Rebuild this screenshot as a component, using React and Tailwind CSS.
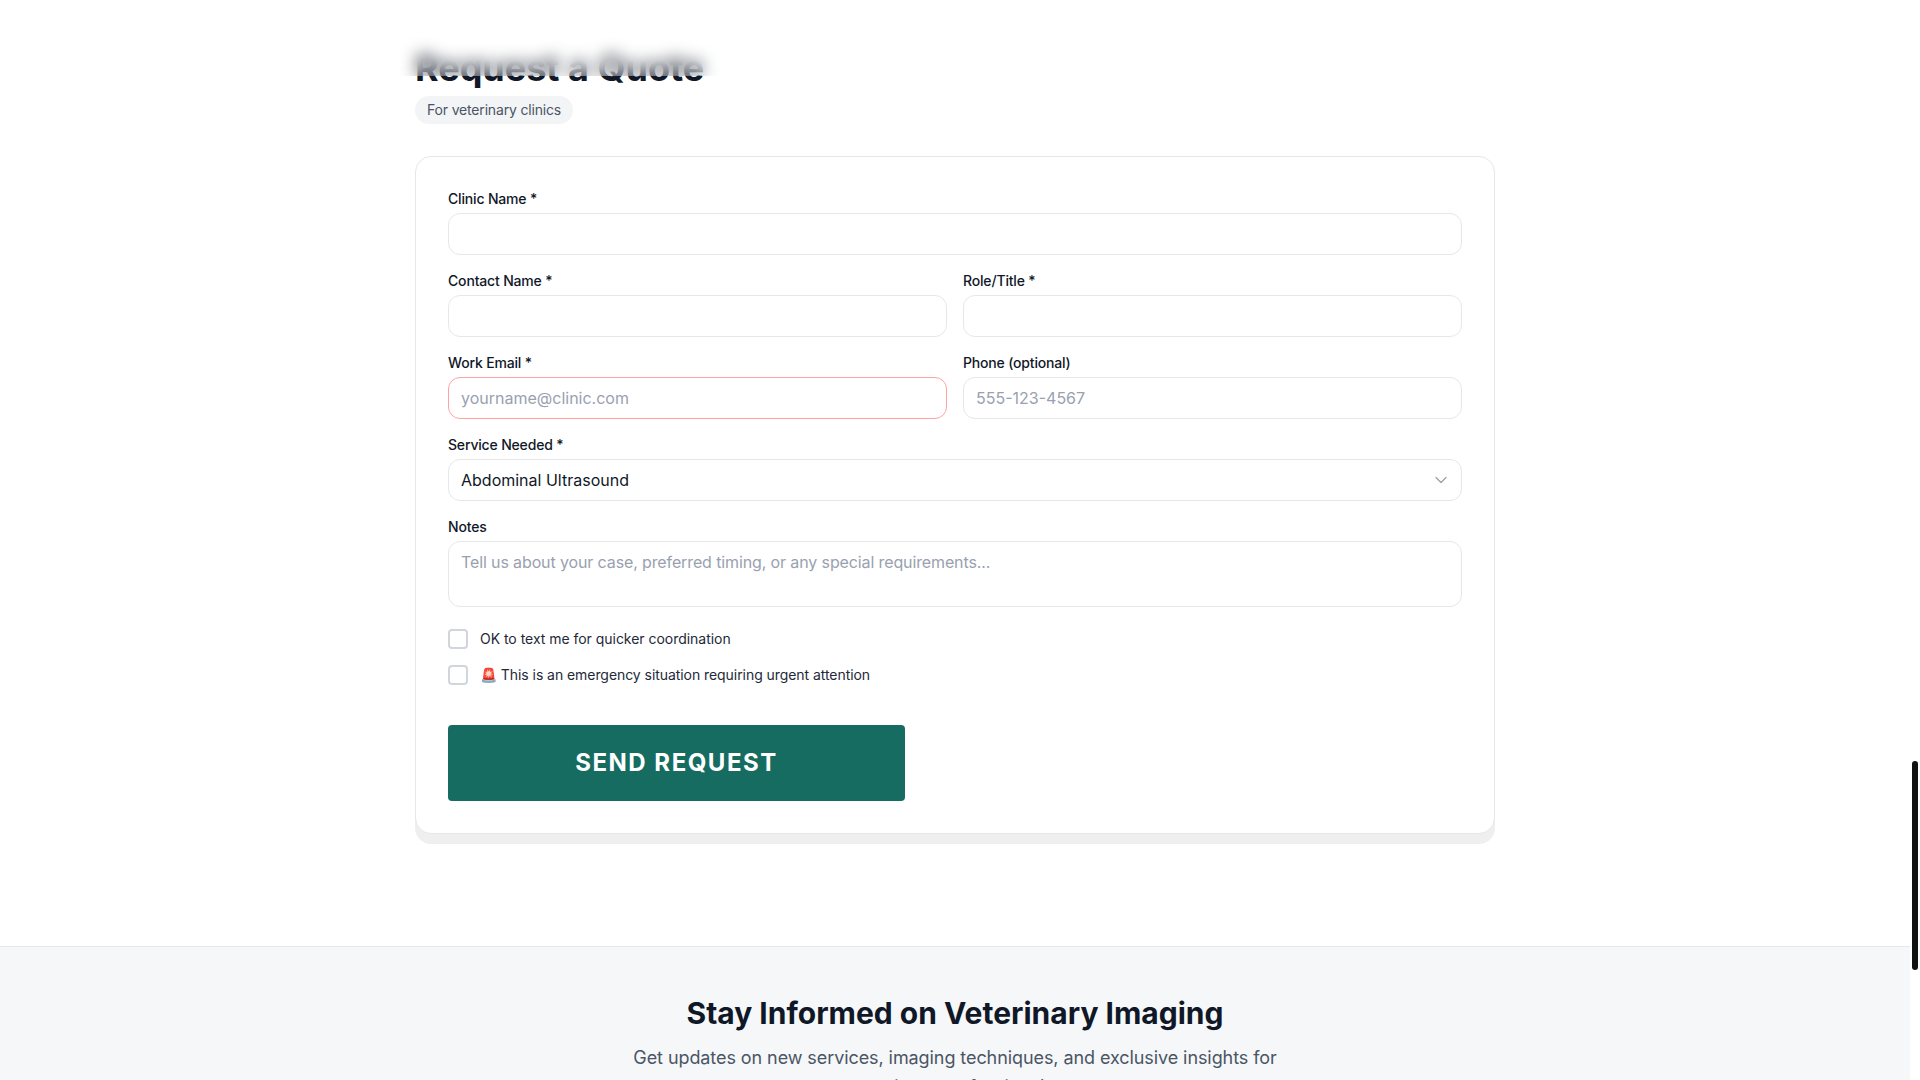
import { ChevronDown } from "lucide-react";

const inputClass =
  "w-full h-[42px] px-3 rounded-xl border border-gray-200 bg-white text-base text-gray-900 placeholder:text-gray-400 outline-none";

function Field({ label, children }) {
  return (
    <div>
      <label className="block text-sm font-medium text-gray-900 mb-1 leading-5 tracking-[-0.17px]">{label}</label>
      {children}
    </div>
  );
}

export default function App() {
  return (
    <div className="relative h-[1080px] w-full overflow-hidden bg-white font-['Inter',sans-serif]">
      <div className="mr-[10px]">
        {/* Quote form */}
        <section className="w-[1080px] mx-auto pt-[48px] pb-[112px]">
          <h2 className="text-4xl font-bold text-gray-900 leading-10">Request a Quote</h2>
          <span className="inline-block mt-2 mb-8 px-3 h-7 leading-7 rounded-full bg-gray-100 text-sm text-gray-600 align-top tracking-[-0.17px]">
            For veterinary clinics
          </span>

          <form className="rounded-2xl border border-gray-200 bg-white p-8 shadow-[0_10px_0_#efefef] flex flex-col gap-4">
            <Field label="Clinic Name *">
              <input className={inputClass} />
            </Field>

            <div className="grid grid-cols-2 gap-4">
              <Field label="Contact Name *">
                <input className={inputClass} />
              </Field>
              <Field label="Role/Title *">
                <input className={inputClass} />
              </Field>
            </div>

            <div className="grid grid-cols-2 gap-4">
              <Field label="Work Email *">
                <input
                  className="w-full h-[42px] px-3 rounded-xl border border-red-300 bg-white text-base text-gray-900 placeholder:text-gray-400 outline-none"
                  placeholder="yourname@clinic.com"
                />
              </Field>
              <Field label="Phone (optional)">
                <input className={inputClass} placeholder="555-123-4567" />
              </Field>
            </div>

            <Field label="Service Needed *">
              <div className="relative">
                <select className={inputClass + " appearance-none"}>
                  <option>Abdominal Ultrasound</option>
                </select>
                <ChevronDown
                  strokeWidth={1.5}
                  className="absolute right-[11px] top-[11px] w-5 h-5 text-gray-400"
                />
              </div>
            </Field>

            <Field label="Notes">
              <textarea
                className="block w-full h-[66px] px-3 py-2 rounded-xl border border-gray-200 bg-white text-base text-gray-900 placeholder:text-gray-400 outline-none resize-none tracking-[-0.12px]"
                placeholder="Tell us about your case, preferred timing, or any special requirements..."
              />
            </Field>

            <div className="mt-[6px] flex flex-col gap-4">
              <label className="flex items-center gap-3 text-sm text-gray-800 tracking-[-0.03px]">
                <input type="checkbox" className="appearance-none w-5 h-5 rounded border-2 border-gray-300 bg-white" />
                OK to text me for quicker coordination
              </label>
              <label className="flex items-center gap-3 text-sm text-gray-800 tracking-[-0.06px]">
                <input type="checkbox" className="appearance-none w-5 h-5 rounded border-2 border-gray-300 bg-white" />
                🚨 This is an emergency situation requiring urgent attention
              </label>
            </div>

            <button
              type="button"
              className="mt-6 w-[457px] h-[76px] rounded bg-[#166c60] text-white text-2xl font-bold tracking-[1.5px]"
            >
              SEND REQUEST
            </button>
          </form>
        </section>

        {/* Newsletter */}
        <section className="border-t border-gray-200 bg-[#f6f7f9] pt-12 pb-12 text-center">
          <h2 className="text-3xl font-bold text-gray-900 leading-9">Stay Informed on Veterinary Imaging</h2>
          <p className="mt-3 max-w-2xl mx-auto text-lg leading-relaxed text-gray-600 tracking-[-0.08px]">
            Get updates on new services, imaging techniques, and exclusive insights for veterinary professionals.
          </p>
        </section>
      </div>

      {/* Blurred sticky header over the scrolled content */}
      <div className="absolute top-0 left-0 right-[10px] h-[76px] bg-white/20 backdrop-blur-[8px]" />

      {/* Scrollbar thumb */}
      <div className="absolute right-[2px] top-[761px] w-[6px] h-[209px] rounded-[3px] bg-[#111]" />
    </div>
  );
}
